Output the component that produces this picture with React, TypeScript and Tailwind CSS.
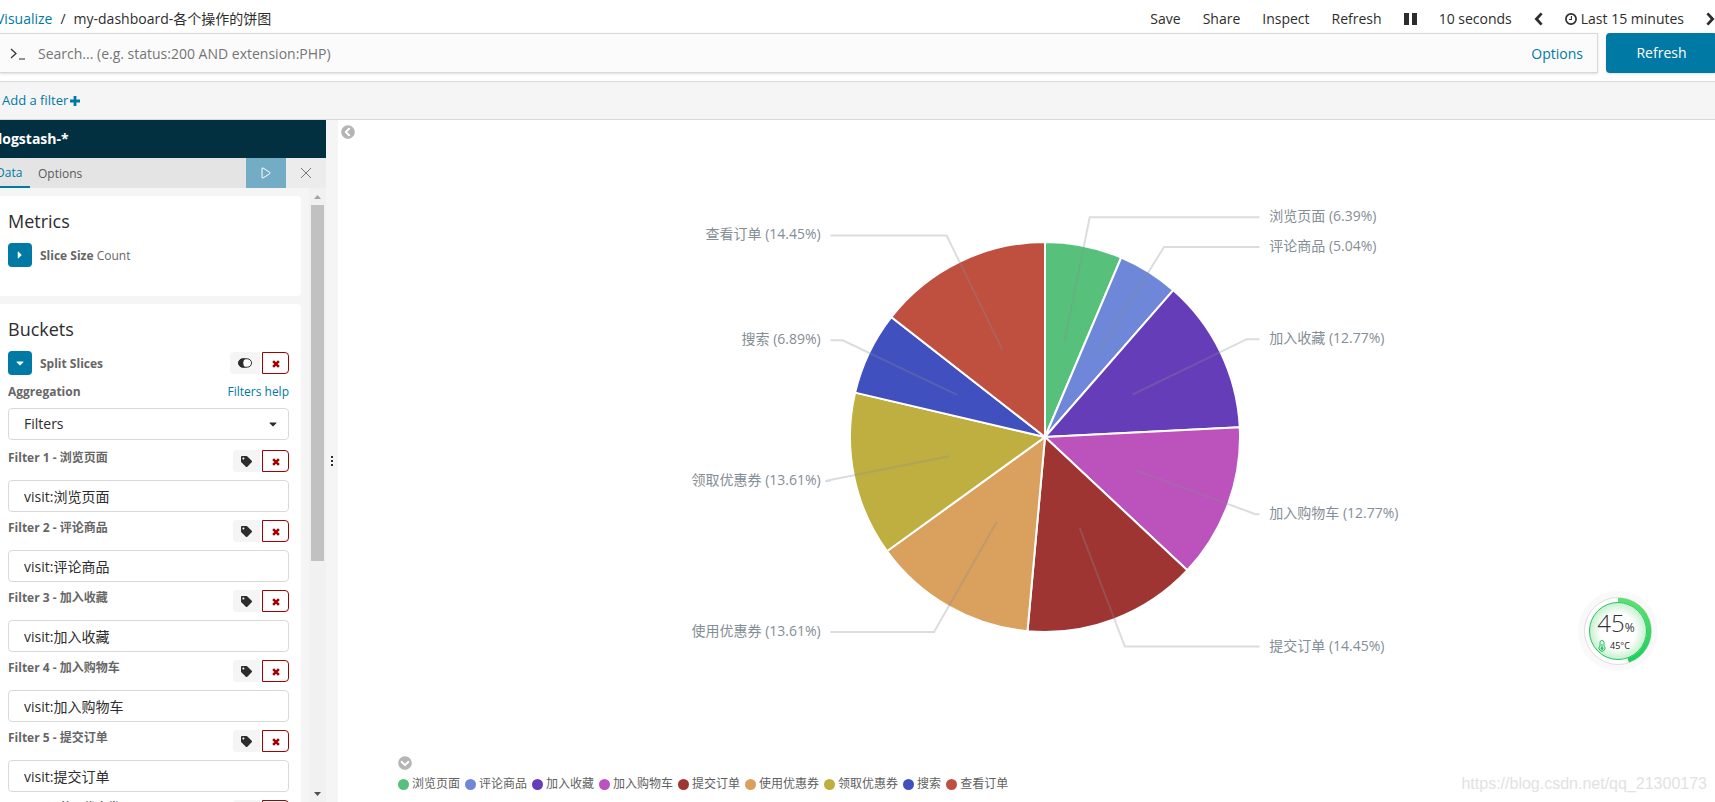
import { useState } from "react";
import type { ReactNode } from "react";
import { FaCaretDown, FaCaretRight, FaChevronCircleDown, FaChevronCircleLeft, FaTag } from "react-icons/fa";

const SLICES = [
  { label: "浏览页面", percent: 6.39, color: "#57c17b" },
  { label: "评论商品", percent: 5.04, color: "#6f87d8" },
  { label: "加入收藏", percent: 12.77, color: "#663db8" },
  { label: "加入购物车", percent: 12.77, color: "#bc52bc" },
  { label: "提交订单", percent: 14.45, color: "#9e3533" },
  { label: "使用优惠券", percent: 13.61, color: "#daa05d" },
  { label: "领取优惠券", percent: 13.61, color: "#bfaf40" },
  { label: "搜索", percent: 6.89, color: "#4050bf" },
  { label: "查看订单", percent: 14.45, color: "#bf5040" },
];

const FILTERS = ["浏览页面", "评论商品", "加入收藏", "加入购物车", "提交订单", "使用优惠券"];

const RADIUS = 195;
const TOTAL = SLICES.reduce((sum, s) => sum + s.percent, 0);

function point(angle: number, r: number) {
  return [Math.sin(angle) * r, -Math.cos(angle) * r];
}

function ChevronIcon({ dir }: { dir: "left" | "right" }) {
  return (
    <svg viewBox="0 0 9 14" className="h-3.5 w-[9px] shrink-0" fill="none" stroke="currentColor" strokeWidth="2.8">
      <path d={dir === "left" ? "M7.6 1.4 2.4 7l5.2 5.6" : "M1.4 1.4 6.6 7l-5.2 5.6"} />
    </svg>
  );
}

function PauseIcon() {
  return (
    <svg viewBox="0 0 13 14" className="h-3.5 w-[13px]" fill="currentColor">
      <rect x="0" y="1" width="5" height="12" />
      <rect x="8" y="1" width="5" height="12" />
    </svg>
  );
}

function ClockIcon() {
  return (
    <svg viewBox="0 0 12 12" className="h-3 w-3" fill="none" stroke="currentColor">
      <circle cx="6" cy="6" r="5.1" strokeWidth="1.7" />
      <path d="M6.4 3v3.5H4" strokeWidth="1.1" />
    </svg>
  );
}

function CrossIcon() {
  return (
    <svg viewBox="0 0 10 10" className="h-2 w-2" stroke="currentColor" strokeWidth="3.2">
      <path d="M1.4 1.4 8.6 8.6M8.6 1.4 1.4 8.6" />
    </svg>
  );
}

function ToggleIcon() {
  return (
    <svg viewBox="0 0 14 10" className="h-2.5 w-3.5">
      <rect x="0.5" y="0.8" width="13" height="8.4" rx="4.2" fill="#fff" stroke="#2d2d2d" />
      <path d="M5 .5a4.500 4.500 0 0 0 0 9h2.600A5.400 5.400 0 0 1 7.600 .5z" fill="#2d2d2d" />
    </svg>
  );
}

function RemoveButton({ label }: { label: string }) {
  return (
    <button
      type="button"
      aria-label={label}
      className="flex h-[22px] w-[27px] items-center justify-center rounded-r border border-[#a30000] bg-white pt-0.5 text-[#a30000]"
    >
      <CrossIcon />
    </button>
  );
}

function TopNav() {
  return (
    <nav className="flex h-[33px] items-center pt-1">
      <ol className="-ml-1 flex flex-1 gap-2">
        <li>
          <a href="#visualize" className="text-[#0079a5]">Visualize</a>
        </li>
        <li>/</li>
        <li>my-dashboard-各个操作的饼图</li>
      </ol>
      <div className="flex items-center gap-[22px]">
        <button type="button">Save</button>
        <button type="button">Share</button>
        <button type="button">Inspect</button>
        <button type="button">Refresh</button>
        <button type="button" aria-label="Pause"><PauseIcon /></button>
        <button type="button">10 seconds</button>
        <button type="button" aria-label="Step back"><ChevronIcon dir="left" /></button>
        <button type="button" className="flex items-center gap-1">
          <ClockIcon />
          Last 15 minutes
        </button>
        <button type="button" aria-label="Step forward"><ChevronIcon dir="right" /></button>
      </div>
    </nav>
  );
}

function QueryBar() {
  return (
    <form className="-mr-0.5 flex h-10 gap-2" onSubmit={(e) => e.preventDefault()}>
      <div className="flex flex-1 items-center border border-l-0 border-[#d9d9d9] bg-[#fbfbfb] pt-0.5 pr-3.5 pl-2.5 shadow-sm">
        <svg viewBox="0 0 16 12" className="h-3 w-4" fill="none" stroke="#2d2d2d" strokeWidth="1.2">
          <path d="M1 1l5 4.500L1 10M9 11h6" />
        </svg>
        <input
          type="text"
          aria-label="Search"
          placeholder="Search... (e.g. status:200 AND extension:PHP)"
          className="flex-1 bg-transparent pl-3 outline-none placeholder:text-[#757575]"
        />
        <a href="#options" className="text-[#0079a5]">Options</a>
      </div>
      <button type="submit" className="w-[111px] rounded bg-[#0079a5] text-white shadow-sm">
        Refresh
      </button>
    </form>
  );
}

function Card({ title, children }: { title: string; children: ReactNode }) {
  return (
    <section className="rounded-r bg-white px-2 pt-3">
      <h2 className="mb-2 text-lg leading-[27px]">{title}</h2>
      {children}
    </section>
  );
}

function FilterRow({ index, name }: { index: number; name: string }) {
  const id = `filter-${index}`;
  return (
    <div className="pt-2">
      <div className="flex justify-between">
        <label htmlFor={id} className="text-xs font-bold text-[#666]">
          Filter {index} - {name}
        </label>
        <div className="mb-2 flex gap-0.5">
          <button
            type="button"
            aria-label={`Label filter ${index}`}
            className="flex h-[22px] w-[27px] items-center justify-center rounded-l bg-[#f5f5f5]"
          >
            <FaTag size={11} />
          </button>
          <RemoveButton label={`Remove filter ${index}`} />
        </div>
      </div>
      <input
        id={id}
        type="text"
        defaultValue={`visit:${name}`}
        className="block h-8 w-full rounded border border-[#d9d9d9] bg-white px-[15px]"
      />
    </div>
  );
}

function Sidebar() {
  return (
    <aside className="flex w-[326px] shrink-0 flex-col overflow-hidden">
      <div className="flex h-[38px] shrink-0 items-center bg-[#023041] font-bold text-white">
        <span className="-ml-0.5">logstash-*</span>
      </div>
      <div className="flex h-[30px] shrink-0 items-stretch bg-[#e4e4e4] text-xs text-[#5a5a5a]">
        <button type="button" className="-ml-1 w-[34px] border-b-2 border-[#0079a5] pt-0.5 text-left text-[#0079a5]">
          Data
        </button>
        <button type="button" className="ml-2 pt-0.5">Options</button>
        <button type="button" aria-label="Apply changes" className="ml-auto flex w-10 items-center justify-center bg-[#73adc5]">
          <svg viewBox="0 0 10 12" className="h-3 w-2.5" fill="none" stroke="#fff" strokeLinejoin="round">
            <path d="M1 1.500Q1 .6 2 1L8.600 5.200Q9.400 6 8.600 6.800L2 11Q1 11.400 1 10.500z" />
          </svg>
        </button>
        <button type="button" aria-label="Discard changes" className="flex w-10 items-center justify-center bg-[#ececec]">
          <svg viewBox="0 0 12 12" className="h-3 w-3" stroke="#777">
            <path d="M1 1l10 10M11 1 1 11" />
          </svg>
        </button>
      </div>
      <div className="flex min-h-0 flex-1 bg-[#f5f5f5]">
        <div className="flex min-w-0 flex-1 flex-col gap-2 overflow-hidden pt-2 pr-2">
          <Card title="Metrics">
            <div className="flex items-center gap-2 pb-[29px] text-xs text-[#666]">
              <button
                type="button"
                aria-label="Expand metric"
                className="flex h-6 w-6 items-center justify-center rounded bg-[#0079a5] text-white"
              >
                <FaCaretRight size={12} />
              </button>
              <span className="pt-0.5"><b>Slice Size</b> Count</span>
            </div>
          </Card>
          <Card title="Buckets">
            <div className="flex items-center text-xs text-[#666]">
              <button
                type="button"
                aria-label="Collapse bucket"
                className="mr-2 flex h-6 w-6 items-center justify-center rounded bg-[#0079a5] text-white"
              >
                <FaCaretDown size={12} />
              </button>
              <b className="flex-1 pt-0.5">Split Slices</b>
              <div className="mr-1 flex gap-0.5">
                <button
                  type="button"
                  aria-label="Disable aggregation"
                  className="flex h-[22px] w-[30px] items-center justify-center rounded-l bg-[#f5f5f5]"
                >
                  <ToggleIcon />
                </button>
                <RemoveButton label="Remove bucket" />
              </div>
            </div>
            <div className="pr-1">
              <div className="my-2 flex justify-between text-xs leading-[17px]">
                <label htmlFor="aggregation" className="font-bold text-[#666]">Aggregation</label>
                <a href="#filters-help" className="text-[#0079a5]">Filters help</a>
              </div>
              <div className="relative mb-0.5">
                <select
                  id="aggregation"
                  className="block h-8 w-full appearance-none rounded border border-[#d9d9d9] bg-white px-[15px]"
                >
                  <option>Filters</option>
                </select>
                <FaCaretDown size={12} className="pointer-events-none absolute top-2.5 right-2.5" />
              </div>
              {FILTERS.map((name, i) => (
                <FilterRow key={name} index={i + 1} name={name} />
              ))}
            </div>
          </Card>
        </div>
        <div className="flex w-[17px] flex-col items-center bg-[#f1f1f1]" aria-hidden="true">
          <svg viewBox="0 0 17 17" className="h-[17px] w-[17px]"><path d="M5 11l3.500-4 3.500 4z" fill="#a3a3a3" /></svg>
          <div className="w-[13px] flex-[356] bg-[#c1c1c1]" />
          <div className="flex-[224]" />
          <svg viewBox="0 0 17 17" className="h-[17px] w-[17px]"><path d="M5 7l3.500 4L12 7z" fill="#505050" /></svg>
        </div>
      </div>
    </aside>
  );
}

function PieChart() {
  let start = 0;
  const arcs = SLICES.map((slice) => {
    const end = start + (slice.percent / TOTAL) * Math.PI * 2;
    const arc = { ...slice, start, end, mid: (start + end) / 2 };
    start = end;
    return arc;
  });

  return (
    <svg viewBox="-370 -240 740 480" className="w-[740px] max-w-full" role="img" aria-label="Pie chart">
      {arcs.map((arc) => {
        const [x1, y1] = point(arc.start, RADIUS);
        const [x2, y2] = point(arc.end, RADIUS);
        return (
          <path
            key={arc.label}
            d={`M0 0L${x1} ${y1}A${RADIUS} ${RADIUS} 0 0 1 ${x2} ${y2}Z`}
            fill={arc.color}
            stroke="#fff"
            strokeWidth="2"
          />
        );
      })}
      {arcs.map((arc) => {
        const side = arc.mid < Math.PI ? 1 : -1;
        const inner = point(arc.mid, RADIUS * 0.5);
        const outer = point(arc.mid, RADIUS * 1.15);
        return (
          <g key={arc.label}>
            <polyline
              points={`${inner} ${outer} ${side * RADIUS * 1.1},${outer[1]}`}
              fill="none"
              stroke="#848e96"
              strokeWidth="2"
              opacity="0.3"
            />
            <text
              x={side * RADIUS * 1.15}
              y={outer[1] + 4}
              textAnchor={side > 0 ? "start" : "end"}
              fill="#848e96"
              fontSize="14"
            >
              {arc.label} ({arc.percent}%)
            </text>
          </g>
        );
      })}
    </svg>
  );
}

function Legend() {
  return (
    <ul className="flex flex-wrap gap-x-[5px] text-xs text-[#5f5f5f]">
      {SLICES.map((slice) => (
        <li key={slice.label} className="flex items-center gap-[3px]">
          <span className="h-[11px] w-[11px] rounded-full" style={{ backgroundColor: slice.color }} />
          {slice.label}
        </li>
      ))}
    </ul>
  );
}

function TemperatureBadge() {
  return (
    <div className="absolute right-14 bottom-[130px] flex h-[82px] w-[82px] flex-col items-center justify-center">
      <svg viewBox="-41 -41 82 82" className="absolute inset-0 h-full w-full">
        <defs>
          <radialGradient id="glow">
            <stop offset="0.6" stopColor="#fff" />
            <stop offset="1" stopColor="#c5f0cd" />
          </radialGradient>
          <linearGradient id="ring" x1="0" y1="0" x2="0" y2="1">
            <stop offset="0" stopColor="#5be070" />
            <stop offset="1" stopColor="#1bd05b" />
          </linearGradient>
        </defs>
        <circle r="40" fill="#f9f9f9" />
        <circle r="33.500" fill="#fff" stroke="#dedede" />
        <path d="M0-31A31 31 0 0 1 10.200 29.300" fill="none" stroke="url(#ring)" strokeWidth="4.500" />
        <circle r="28.500" fill="url(#glow)" stroke="#22c55e" />
      </svg>
      <div className="relative flex items-baseline pr-1 leading-6 text-[#333]">
        <span className="text-2xl leading-6 font-light">45</span>
        <span className="text-xs leading-6">%</span>
      </div>
      <div className="relative flex items-center gap-1 pr-2 text-[9px] leading-3 font-medium text-[#222]">
        <svg viewBox="0 0 8 12" className="h-3 w-2" fill="none" stroke="#16c258">
          <path d="M2 6V2.500a2 2 0 0 1 4 0V6a3 3 0 1 1-4 0z" />
          <path d="M4 4v4" />
          <circle cx="4" cy="8.500" r="1" fill="#16c258" />
        </svg>
        45°C
      </div>
    </div>
  );
}

export default function App() {
  const [sidebarOpen, setSidebarOpen] = useState(true);

  return (
    <div className="relative flex h-screen flex-col overflow-hidden bg-white font-['Open_Sans','Noto_Sans_CJK_SC',sans-serif] text-sm text-[#2d2d2d]">
      <TopNav />
      <QueryBar />
      <div className="mt-2 flex h-[39px] shrink-0 items-center border-y border-[#d9d9d9] bg-[#f5f5f5] pl-0.5 text-[13px]">
        <button type="button" className="flex items-center gap-0.5 text-[#0079a5]">
          Add a filter
          <svg viewBox="0 0 10 10" className="h-2.5 w-2.5" stroke="currentColor" strokeWidth="2.800">
            <path d="M5 0v10M0 5h10" />
          </svg>
        </button>
      </div>
      <main className="flex min-h-0 flex-1">
        {sidebarOpen && <Sidebar />}
        <div className="flex w-3 shrink-0 items-center justify-center bg-[#f5f5f5]">
          <svg viewBox="0 0 2 12" className="h-3 w-0.5" fill="#2d2d2d">
            <path d="M0 1h2v2H0zM0 5h2v2H0zM0 9h2v2H0z" />
          </svg>
        </div>
        <div className="w-[37px] shrink-0 pt-[5px] pl-[3px]">
          <button
            type="button"
            aria-label="Toggle sidebar"
            onClick={() => setSidebarOpen((open) => !open)}
            className="block text-[#b5b5b5]"
          >
            <FaChevronCircleLeft size={14} />
          </button>
        </div>
        <div className="flex min-w-0 flex-1 flex-col">
          <div className="flex min-h-0 flex-1 items-center justify-center pb-0.5">
            <PieChart />
          </div>
          <div className="pb-2.5 pl-[23px]">
            <button type="button" aria-label="Toggle legend" className="mb-1.5 block text-[#b5b5b5]">
              <FaChevronCircleDown size={14} />
            </button>
            <Legend />
          </div>
        </div>
      </main>
      <TemperatureBadge />
      <p className="pointer-events-none absolute right-2 bottom-2 font-['Liberation_Sans',sans-serif] text-base leading-5 text-[#e2e2e2]">
        https://blog.csdn.net/qq_21300173
      </p>
    </div>
  );
}
